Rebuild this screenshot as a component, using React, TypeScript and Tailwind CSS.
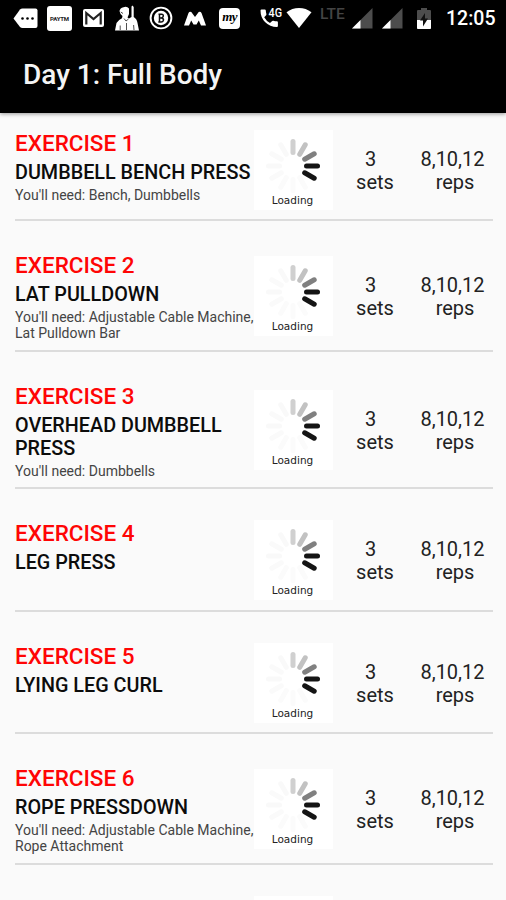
import React from "react";

type Exercise = {
    name: string;
    needs?: string;
    height: string;
};

const exercises: Exercise[] = [
    { name: "DUMBBELL BENCH PRESS", needs: "Bench, Dumbbells", height: "h-[108px] pt-[17px]" },
    { name: "LAT PULLDOWN", needs: "Adjustable Cable Machine, Lat Pulldown Bar", height: "h-[131px] pt-[31px]" },
    { name: "OVERHEAD DUMBBELL PRESS", needs: "Dumbbells", height: "h-[137px] pt-[31px]" },
    { name: "LEG PRESS", height: "h-[123px] pt-[31px]" },
    { name: "LYING LEG CURL", height: "h-[122px] pt-[31px]" },
    { name: "ROPE PRESSDOWN", needs: "Adjustable Cable Machine, Rope Attachment", height: "h-[131px] pt-[31px]" },
];

// spoke colours, clockwise from twelve o'clock
const spokes = ["#d0d0d0", "#c2c2c2", "#808080", "#141414", "#141414", "#fbfbfb", "#fbfbfb", "#fbfbfb", "#fafafa", "#f9f9f9", "#fafafa", "#f9f9f9"];

const Loader = () => (
    <div className="w-[79px] h-[80px] shrink-0 bg-white flex flex-col items-center">
        <svg className="w-[79px] h-[64px] shrink-0" viewBox="0 0 79 64">
            {spokes.map((color, i) => (
                <line key={i} x1="39" y1="22.5" x2="39" y2="11.5" stroke={color} strokeWidth="5" strokeLinecap="round" transform={`rotate(${i * 30} 39 36)`} />
            ))}
        </svg>
        <span className="pr-[2px] font-['DejaVu_Sans',sans-serif] text-[10.5px] leading-[13px] text-[#222]">Loading</span>
    </div>
);

const Signal = (props: { className: string }) => (
    <svg className={props.className} viewBox="0 0 21 21">
        <path d="M0 20.5L20.5 0V20.5Z" fill="#4d4d4d" />
        <path d="M0 20.5L8.5 12V20.5Z" fill="#fff" />
    </svg>
);

const StatusBar = () => (
    <div className="h-[36px] flex items-center pl-[13px] text-white">
        <svg className="w-[25px] h-[21px] shrink-0" viewBox="0 0 25 21">
            <path d="M0.5 10.5L7 1.5Q8 0.5 9.5 0.5H22.5Q24.5 0.5 24.5 2.5V18Q24.5 20 22.5 20H9.5Q8 20 7 19Z" fill="#fff" />
            <circle cx="9.5" cy="10.5" r="1.3" /><circle cx="14.5" cy="10.5" r="1.3" /><circle cx="19.5" cy="10.5" r="1.3" />
        </svg>
        <div className="w-[25px] h-[25px] shrink-0 ml-[9px] rounded-[3px] bg-white text-[#222] flex items-center justify-center font-['Roboto',sans-serif] font-bold text-[6px] tracking-[-0.2px]">PAYTM</div>
        <svg className="w-[21px] h-[18px] shrink-0 ml-[11px]" viewBox="0 0 21 18">
            <rect width="21" height="18" rx="2" fill="#fff" />
            <path d="M3.3 15.5V4L10.5 10L17.7 4V15.5" fill="none" stroke="#222" strokeWidth="2.2" />
        </svg>
        <svg className="w-[24px] h-[26px] shrink-0 ml-[11px]" viewBox="0 0 24 26">
            <path d="M4.5 6Q5 3 8.5 2.2Q12 1 14 3.5V9L12.5 12.5L14 13.5L16.5 12V1.5L17.5 0.5L18.7 2V12Q22 14 22.5 18L24 25.5H0L1.5 18Q3 15 7 13.2L7.5 11L5.5 9Z" fill="#fff" />
            <path d="M5.8 7L8 8.5M9 13.5L11 16L13.5 14M11.5 18V25M5.2 20.5V25M18.6 20L19 25" fill="none" stroke="#222" strokeWidth="0.8" />
        </svg>
        <svg className="w-[24px] h-[24px] shrink-0 ml-[10px] mr-[1px]" viewBox="0 0 24 24">
            <circle cx="12" cy="12" r="10.4" fill="none" stroke="#fff" strokeWidth="1.9" />
            <circle cx="12" cy="12" r="7.2" fill="#fff" />
            <path d="M9.5 8.2H12.5Q14.5 8.4 14.3 10.1Q14 11.7 12.3 11.9Q14.7 12.2 14.5 14Q14.2 15.9 12 15.9H9.3M10.5 8.2V15.9M10.5 11.9H12.3" fill="none" stroke="#111" strokeWidth="1.5" />
        </svg>
        <svg className="w-[22px] h-[15px] shrink-0 ml-[10px]" viewBox="0 0 22 15">
            <path d="M0 14.5L4.5 2Q5.5 0 7.3 1L11 6L14.7 1Q16.5 0 17.5 2L22 14.5H17L14.8 9.5L12.5 13.5H9.5L7.2 9.5L5 14.5Z" fill="#fff" />
        </svg>
        <div className="w-[21px] h-[21px] shrink-0 ml-[13px] rounded-[4px] bg-white text-black flex items-center justify-center font-['Liberation_Serif',serif] font-bold italic text-[13px] leading-[12px] pb-[2px] tracking-[-0.6px]">my</div>
        <svg className="w-[24px] h-[24px] shrink-0 ml-[20px] mr-[-1px] mb-[4px]" viewBox="0 -4 24 24">
            <path d="M1.5 1.5H4.8Q5.7 1.5 5.8 2.5Q5.9 4.3 6.4 6Q6.6 6.6 6.1 7.2L4.2 9.3Q6.3 13.1 10 15L12.2 13Q12.7 12.5 13.4 12.7Q15 13.2 16.9 13.3Q17.9 13.4 17.9 14.3V18Q17.9 19 16.9 19Q10 19 5 14Q0.5 9.3 0.5 2.5Q0.5 1.5 1.5 1.5Z" fill="#fff" />
            <text x="8.6" y="9.4" fill="#fff" fontSize="12" fontFamily="Roboto, sans-serif" fontWeight="500" textLength="13.5" lengthAdjust="spacingAndGlyphs">4G</text>
        </svg>
        <svg className="w-[26px] h-[20px] shrink-0 ml-[3px]" viewBox="0 0 26 20">
            <path d="M0.5 4.3Q6 0 13 0Q20 0 25.5 4.3L13 20Z" fill="#fff" />
        </svg>
        <span className="w-[25px] h-[20px] shrink-0 ml-[7px] mb-[3px] pl-[1px] font-['Roboto',sans-serif] font-medium text-[15.5px] leading-[15px] text-[#444]">LTE</span>
        <Signal className="w-[21px] h-[21px] shrink-0 ml-[8px] mt-[1px]" />
        <Signal className="w-[21px] h-[21px] shrink-0 ml-[9px] mt-[1px]" />
        <svg className="w-[14px] h-[21px] shrink-0 ml-[14px]" viewBox="0 0 14 21">
            <path d="M4 0H10V2H13Q14 2 14 3V20Q14 21 13 21H1Q0 21 0 20V3Q0 2 1 2H4Z" fill="#4d4d4d" />
            <path d="M0 12H14V20Q14 21 13 21H1Q0 21 0 20Z" fill="#fff" />
            <path d="M8 5V10.5H11L6 18.5V12.5H3Z" fill="#111" />
        </svg>
        <span className="shrink-0 ml-[15px] font-['Roboto',sans-serif] font-medium text-[19.5px] leading-[24px] pt-[1px]">12:05</span>
    </div>
);

const ExerciseRow = (props: { exercise: Exercise; index: number }) => {
    const { exercise, index } = props;

    return (
        <div className={`${exercise.height} ml-[15px] mr-[13px] border-b-2 border-[#dcdcdc] flex items-start`}>
            <div className="w-[241px] shrink-0 mr-[-2px]">
                <h2 className="text-[22.5px] leading-[27px] font-medium text-[#ff0505] whitespace-nowrap">EXERCISE {index + 1}</h2>
                <h3 className="mt-[4px] text-[19.8px] leading-[23px] font-medium text-[#0c0c0c]">{exercise.name}</h3>
                {exercise.needs ? <p className="mt-[3px] mr-[-4px] text-[14px] leading-[16px] text-[#444]">You'll need: {exercise.needs}</p> : null}
            </div>
            <div className="self-stretch flex items-center pb-[10px]">
                <Loader />
                <div className="w-[84px] pt-[2px] text-center text-[20px] leading-[23px] text-[#222]">
                    <p className="pr-[9px]">3</p>
                    <p>sets</p>
                </div>
                <div className="w-[76px] pt-[2px] text-center text-[20px] leading-[23px] text-[#222]">
                    <p className="pr-[5px]">8,10,12</p>
                    <p>reps</p>
                </div>
            </div>
        </div>
    );
};

const App = () => {
    return (
        <div className="w-[506px] h-[900px] overflow-hidden bg-[#fafafa] font-['Roboto',sans-serif]">
            <header className="relative h-[113px] bg-black shadow-[0_1px_4px_rgba(0,0,0,0.4)]">
                <StatusBar />
                <h1 className="pl-[23px] pt-[22px] text-[28px] leading-[34px] font-medium text-[#f4f4f4]">Day 1: Full Body</h1>
            </header>
            <main>
                {exercises.map((exercise, i) => (
                    <ExerciseRow key={exercise.name} exercise={exercise} index={i} />
                ))}
                {/* top of the next row's thumbnail */}
                <div className="mt-[31px] ml-[254px] w-[79px] h-[4px] bg-white" />
            </main>
        </div>
    );
};

export default App;
